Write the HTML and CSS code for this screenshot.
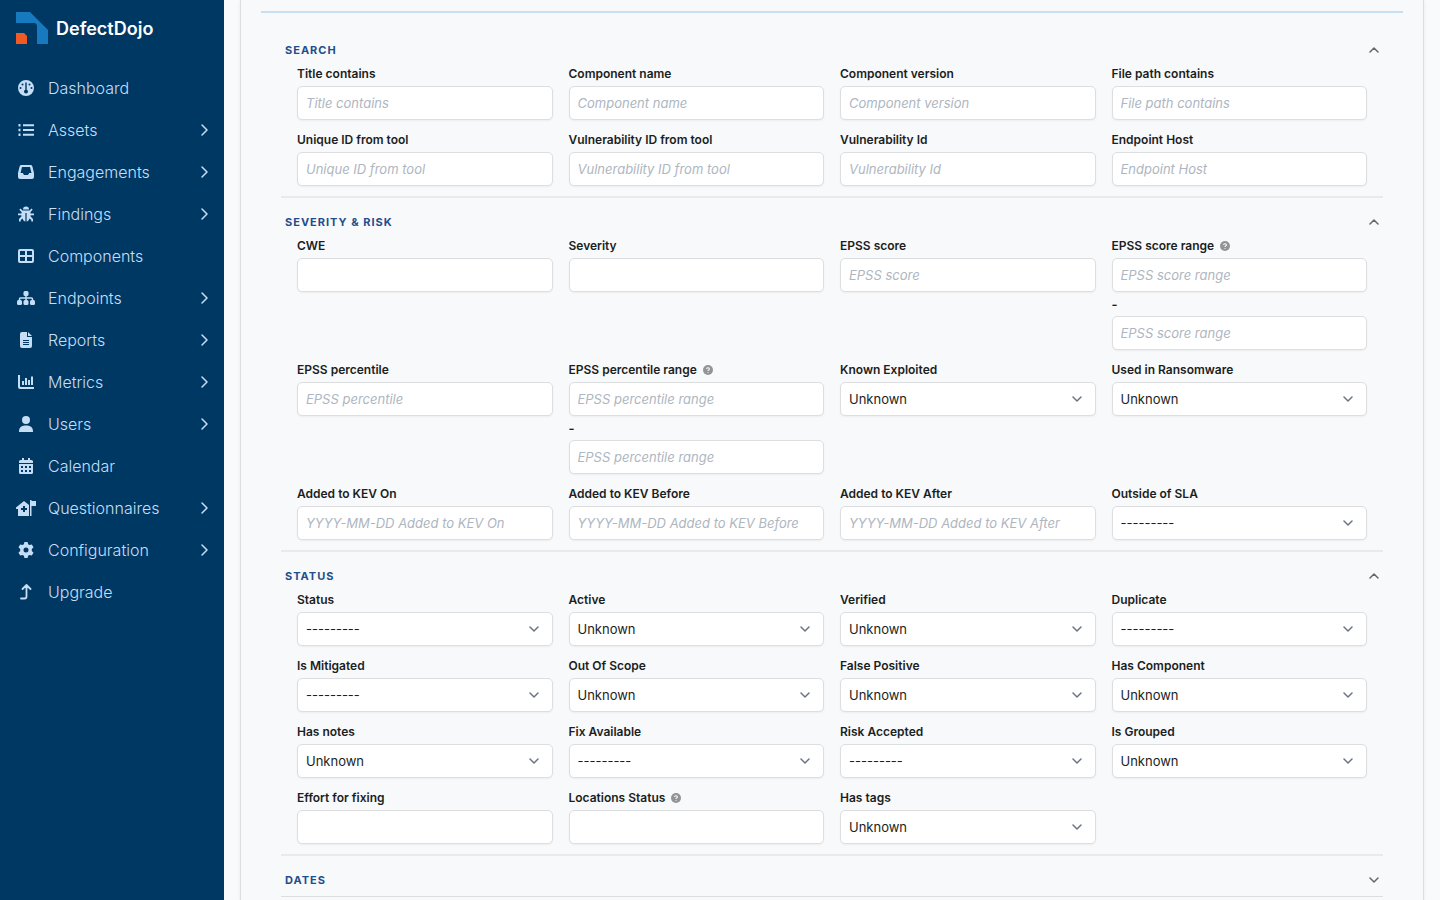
FILE: index.html
```
<!DOCTYPE html>
<html lang="en">
<head>
    <meta charset="UTF-8">
    <meta name="viewport" content="width=device-width, initial-scale=1.0">
    <title>DefectDojo</title>
    <link rel="stylesheet" href="styles.css">
</head>
<body>
    <aside class="sidebar">
        <a class="brand" href="#">
            <svg class="brand-logo" viewBox="0 0 32 32" aria-hidden="true">
                <path fill="#1779be" d="M0 0h14l18 18v14H21V13l-2-2H0z"/>
                <path fill="#f15a24" d="M0 21h8l3 3v8H0z"/>
            </svg>
            <span>DefectDojo</span>
        </a>
        <nav class="nav" id="nav"></nav>
    </aside>

    <main class="content">
        <form class="panel">
            <div class="filters" id="filters"></div>
        </form>
    </main>

    <script src="script.js"></script>
</body>
</html>
```
FILE: styles.css
```
:root {
    --sidebar: #003864;
    --sidebar-text: #c6def5;
    --heading: #1f4e8c;
    --text: #1b1e22;
    --page: #f9fafc;
    --panel: #f8f9fb;
    --line: #dcdee0;
    --line-soft: #e8eaec;
}

* {
    box-sizing: border-box;
}

body {
    margin: 0;
    min-height: 100vh;
    display: flex;
    font-family: Inter, "Liberation Sans", sans-serif;
    font-size: 13px;
    color: var(--text);
    background: var(--page);
}

/* Sidebar */
.sidebar {
    position: sticky;
    top: 0;
    flex: 0 0 224px;
    height: 100vh;
    background: var(--sidebar);
}

.brand {
    display: flex;
    align-items: center;
    gap: 8px;
    height: 56px;
    padding: 0 16px;
    color: #ffffff;
    font-size: 18px;
    font-weight: 600;
    text-decoration: none;
}

.brand-logo {
    width: 32px;
    height: 32px;
}

.nav {
    display: flex;
    flex-direction: column;
    gap: 2px;
    padding: 12px 8px;
}

.nav-link {
    display: flex;
    align-items: center;
    gap: 12px;
    height: 40px;
    padding: 0 8px;
    color: var(--sidebar-text);
    font-size: 16px;
    font-weight: 300;
    text-decoration: none;
}

.nav-icon {
    flex: none;
    width: 20px;
    height: 16px;
    fill: currentColor;
}

.nav-label {
    flex: 1;
}

.nav-arrow {
    width: 7px;
    height: 12px;
    fill: none;
    stroke: currentColor;
    stroke-width: 1.5;
    stroke-linecap: round;
    stroke-linejoin: round;
}

/* Filter panel */
.content {
    flex: 1;
    display: flex;
    min-width: 0;
    padding: 0 16px;
}

.panel {
    flex: 1;
    min-width: 0;
    padding: 11px 20px 0;
    background: var(--panel);
    border: solid var(--line);
    border-width: 0 1px;
    box-shadow: 0 1px 3px rgba(0, 0, 0, 0.08);
}

.filters {
    padding: 21px 20px 0;
    border-top: 2px solid #c6dff3;
}

.section-toggle {
    display: flex;
    align-items: center;
    justify-content: space-between;
    width: 100%;
    padding: 8px 4px;
    border: 0;
    background: none;
    color: var(--heading);
    font: 700 11px/16px Inter, "Liberation Sans", sans-serif;
    letter-spacing: 1px;
    text-transform: uppercase;
    cursor: pointer;
}

.section + .section {
    padding-top: 8px;
    border-top: 2px solid var(--line-soft);
}

.section:last-child {
    border-bottom: 1px solid var(--line);
}

.section h3 {
    margin: 0;
    font-size: 11px;
}

.section-arrow {
    width: 10px;
    height: 6px;
    fill: none;
    stroke: #62676c;
    stroke-width: 1.5;
    stroke-linecap: round;
    stroke-linejoin: round;
}

.section-toggle[aria-expanded="true"] .section-arrow {
    transform: rotate(180deg);
}

.section-body {
    display: grid;
    grid-template-columns: repeat(4, minmax(0, 1fr));
    gap: 12px 16px;
    padding: 0 16px 10px;
}

.section-body[hidden] {
    display: none;
}

.field-label {
    display: flex;
    align-items: center;
    gap: 6px;
    margin-bottom: 4px;
    font-size: 12px;
    font-weight: 600;
    line-height: 16px;
}

.help {
    width: 10px;
    height: 10px;
}

.range-dash {
    line-height: 24px;
    font-weight: 600;
}

.control {
    display: block;
    width: 100%;
    height: 34px;
    padding: 0 8px;
    border: 1px solid var(--line);
    border-radius: 5px;
    background: #ffffff;
    box-shadow: 0 1px 2px rgba(0, 0, 0, 0.05);
    color: var(--text);
    font-family: inherit;
    font-size: 13px;
}

.control::placeholder {
    color: #aeb6bf;
    font-style: italic;
    opacity: 1;
}

select.control {
    appearance: none;
    padding-right: 32px;
    background: #ffffff url("data:image/svg+xml,%3Csvg xmlns='http://www.w3.org/2000/svg' viewBox='0 0 10 6'%3E%3Cpath d='M1 1l4 4 4-4' fill='none' stroke='%236b7480' stroke-width='1.5' stroke-linecap='round' stroke-linejoin='round'/%3E%3C/svg%3E") no-repeat right 13px center / 10px 6px;
}

@media (max-width: 900px) {
    .section-body {
        grid-template-columns: repeat(2, minmax(0, 1fr));
    }
}
```
FILE: script.js
```
const navItems = [
    { label: 'Dashboard', icon: '<path fill-rule="evenodd" d="M10 0a8 8 0 1 1 0 16a8 8 0 0 1 0-16zM9.3 2.5v7.2a2 2 0 1 0 1.4 0V2.5zM6.5 3.5a1 1 0 1 0 0 2a1 1 0 0 0 0-2zM13.5 3.5a1 1 0 1 0 0 2a1 1 0 0 0 0-2zM4.5 7a1 1 0 1 0 0 2a1 1 0 0 0 0-2zM15.5 7a1 1 0 1 0 0 2a1 1 0 0 0 0-2z"/>' },
    { label: 'Assets', arrow: true, icon: '<path d="M2.5 2h2v2.5h-2zM2.5 6.8h2v2.4h-2zM2.5 11.5h2V14h-2zM7 2.2h11v2H7zM7 7h11v2H7zM7 11.8h11v2H7z"/>' },
    { label: 'Engagements', arrow: true, icon: '<path fill-rule="evenodd" d="M5.5 1h9a2 2 0 0 1 1.9 1.4L18 9v4a2 2 0 0 1-2 2H4a2 2 0 0 1-2-2V9l1.600-6.600A2 2 0 0 1 5.500 1zM6 3L4.500 9h2.300l1.200 2h4l1.200-2h2.300L14 3z"/>' },
    { label: 'Findings', arrow: true, icon: '<path d="M7 3.500a3 3 0 0 1 6 0zM6.500 4.500h7l2-2 1.200 1.200-2.200 2.300v1.500H18v1.700h-3.400v1.300l2.400 2.600v2.400h-1.700v-1.600l-1.700-1.500Q12.600 15 10.600 15.600V7H9.400v8.600Q7.400 15 6.400 12.400l-1.700 1.500v1.600H3v-2.400l2.400-2.600V9.200H2V7.500h3.500V6L3.300 3.700 4.500 2.500z"/>' },
    { label: 'Components', icon: '<path fill-rule="evenodd" d="M4 1h12a2 2 0 0 1 2 2v10a2 2 0 0 1-2 2H4a2 2 0 0 1-2-2V3a2 2 0 0 1 2-2zM4 3v4h5V3zM11 3v4h5V3zM4 9v4h5V9zM11 9v4h5V9z"/>' },
    { label: 'Endpoints', arrow: true, icon: '<rect x="7.500" y="1" width="5" height="5" rx="1.500"/><rect x="1" y="10" width="5" height="5" rx="1.500"/><rect x="7.500" y="10" width="5" height="5" rx="1.500"/><rect x="14" y="10" width="5" height="5" rx="1.500"/><path fill="none" stroke="currentColor" stroke-width="1.500" d="M10 5v6M3.500 11V9a1 1 0 0 1 1-1h11a1 1 0 0 1 1 1v2"/>' },
    { label: 'Reports', arrow: true, icon: '<path fill-rule="evenodd" d="M6 0h5v5h5v9a2 2 0 0 1-2 2H6a2 2 0 0 1-2-2V2a2 2 0 0 1 2-2zM12 0l4 4h-4zM7 8v1h6V8zM7 10v1h6v-1zM7 12v1h6v-1z"/>' },
    { label: 'Metrics', arrow: true, icon: '<path d="M2 1h2v11.200a.8.8 0 0 0 .8.8H18v2H4a2 2 0 0 1-2-2zM6 7h2v4H6zM9 4h2v7H9zM12 6h2v5h-2zM15 2.500h2V11h-2z"/>' },
    { label: 'Users', arrow: true, icon: '<circle cx="10" cy="4" r="4"/><path d="M3 16v-1a5.500 5.500 0 0 1 5.500-5.500h3A5.500 5.500 0 0 1 17 15v1z"/>' },
    { label: 'Calendar', icon: '<path fill-rule="evenodd" d="M6 0h2v2h4V0h2v2h1.500A1.500 1.500 0 0 1 17 3.500V5H3V3.500A1.500 1.500 0 0 1 4.500 2H6zM3 6h14v8.500a1.500 1.500 0 0 1-1.500 1.500h-11A1.500 1.500 0 0 1 3 14.500zM5 8v2h2V8zM9 8v2h2V8zM13 8v2h2V8zM5 12v2h2v-2zM9 12v2h2v-2zM13 12v2h2v-2z"/>' },
    { label: 'Questionnaires', arrow: true, icon: '<path fill-rule="evenodd" d="M8 1l5 4V16H2V9H0V7.500zM7 6v2H5v2h2v2h2v-2h2V8H9V6z"/><path d="M14 0h1.500v1H20v5h-4.500v10H14z"/>' },
    { label: 'Configuration', arrow: true, icon: '<path fill-rule="evenodd" d="M8.400 0h3.200l.5 2.200 1.500.9 2.200-.7 1.700 2.800-1.700 1.700v2.200l1.700 1.700-1.700 2.800-2.200-.7-1.500.9-.5 2.200H8.400l-.5-2.200-1.500-.9-2.200.7-1.700-2.800 1.700-1.700V6.900L2.500 5.200l1.700-2.800 2.200.7 1.500-.9zM10 5.500a2.500 2.500 0 1 0 0 5a2.500 2.500 0 0 0 0-5z"/>' },
    { label: 'Upgrade', icon: '<path fill="none" stroke="currentColor" stroke-width="1.800" stroke-linecap="round" stroke-linejoin="round" d="M6.500 5L10.500 1l4 4M10.500 1v11.500a2 2 0 0 1-2 2H5"/>' }
];

const unknown = 'Unknown';
const dashes = '---------';

// select: drop-down value, range: two boxes, blank: box without placeholder
const sections = [
    {
        title: 'Search',
        fields: [
            { label: 'Title contains' },
            { label: 'Component name' },
            { label: 'Component version' },
            { label: 'File path contains' },
            { label: 'Unique ID from tool' },
            { label: 'Vulnerability ID from tool' },
            { label: 'Vulnerability Id' },
            { label: 'Endpoint Host' }
        ]
    },
    {
        title: 'Severity & Risk',
        fields: [
            { label: 'CWE', blank: true },
            { label: 'Severity', blank: true },
            { label: 'EPSS score' },
            { label: 'EPSS score range', help: true, range: true },
            { label: 'EPSS percentile' },
            { label: 'EPSS percentile range', help: true, range: true },
            { label: 'Known Exploited', select: unknown },
            { label: 'Used in Ransomware', select: unknown },
            { label: 'Added to KEV On', prefix: 'YYYY-MM-DD ' },
            { label: 'Added to KEV Before', prefix: 'YYYY-MM-DD ' },
            { label: 'Added to KEV After', prefix: 'YYYY-MM-DD ' },
            { label: 'Outside of SLA', select: dashes }
        ]
    },
    {
        title: 'Status',
        fields: [
            { label: 'Status', select: dashes },
            { label: 'Active', select: unknown },
            { label: 'Verified', select: unknown },
            { label: 'Duplicate', select: dashes },
            { label: 'Is Mitigated', select: dashes },
            { label: 'Out Of Scope', select: unknown },
            { label: 'False Positive', select: unknown },
            { label: 'Has Component', select: unknown },
            { label: 'Has notes', select: unknown },
            { label: 'Fix Available', select: dashes },
            { label: 'Risk Accepted', select: dashes },
            { label: 'Is Grouped', select: unknown },
            { label: 'Effort for fixing', blank: true },
            { label: 'Locations Status', help: true, blank: true },
            { label: 'Has tags', select: unknown }
        ]
    },
    { title: 'Dates', collapsed: true, fields: [] }
];

const helpIcon = `
    <svg class="help" viewBox="0 0 10 10" aria-hidden="true">
        <circle cx="5" cy="5" r="5" fill="#949494"/>
        <path d="M3.600 3.900a1.400 1.200 0 1 1 2 1.100Q5 5.300 5 5.900M5 7v.800" fill="none" stroke="#f8f9fb" stroke-width="1.100"/>
    </svg>`;

function renderControl(field, id) {
    if (field.select) {
        return `<select class="control" id="${id}"><option>${field.select}</option></select>`;
    }
    const placeholder = field.blank ? '' : (field.prefix || '') + field.label;
    const input = `<input class="control" type="text" id="${id}" placeholder="${placeholder}">`;
    if (!field.range) {
        return input;
    }
    return `${input}
        <div class="range-dash">-</div>
        <input class="control" type="text" aria-label="${field.label} to" placeholder="${placeholder}">`;
}

function renderField(field) {
    const id = 'id_' + field.label.toLowerCase().replace(/ /g, '_');
    return `
        <div class="field">
            <label class="field-label" for="${id}">${field.label}${field.help ? helpIcon : ''}</label>
            ${renderControl(field, id)}
        </div>`;
}

document.getElementById('nav').innerHTML = navItems.map(item => `
    <a class="nav-link" href="#">
        <svg class="nav-icon" viewBox="0 0 20 16" aria-hidden="true">${item.icon}</svg>
        <span class="nav-label">${item.label}</span>
        ${item.arrow ? '<svg class="nav-arrow" viewBox="0 0 7 12" aria-hidden="true"><path d="M1 1l5 5-5 5"/></svg>' : ''}
    </a>
`).join('');

document.getElementById('filters').innerHTML = sections.map(section => `
    <section class="section">
        <h3>
            <button type="button" class="section-toggle" aria-expanded="${!section.collapsed}">
                <span>${section.title.replace('&', '&amp;')}</span>
                <svg class="section-arrow" viewBox="0 0 10 6" aria-hidden="true"><path d="M1 1l4 4 4-4"/></svg>
            </button>
        </h3>
        <div class="section-body" ${section.collapsed ? 'hidden' : ''}>
            ${section.fields.map(renderField).join('')}
        </div>
    </section>
`).join('');

// Collapse and expand the filter groups
document.querySelectorAll('.section-toggle').forEach(toggle => {
    toggle.addEventListener('click', () => {
        const body = toggle.closest('.section').querySelector('.section-body');
        body.hidden = !body.hidden;
        toggle.setAttribute('aria-expanded', String(!body.hidden));
    });
});
```
